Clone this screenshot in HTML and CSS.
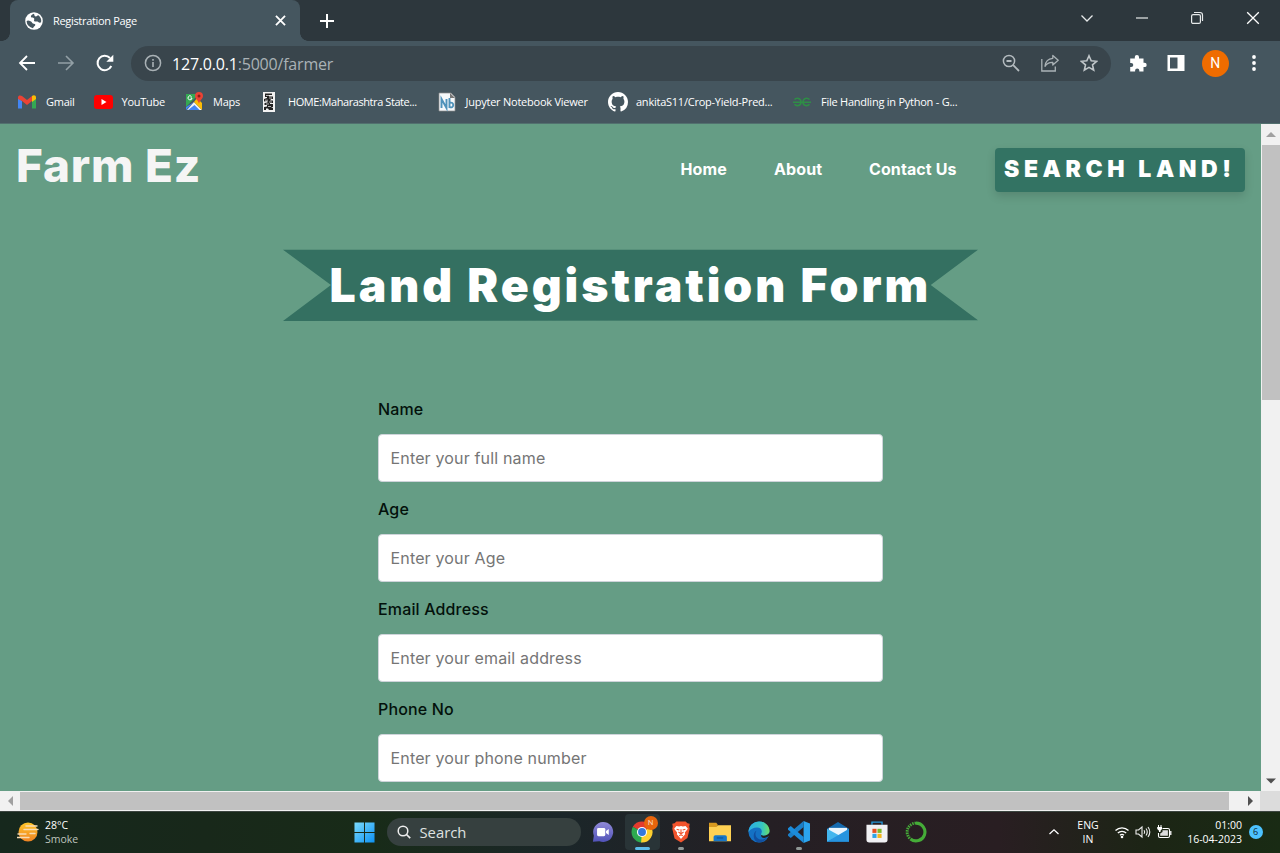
FILE: index.html
```html
<!DOCTYPE html>
<html lang="en">
<head>
<meta charset="utf-8">
<title>Registration Page</title>
<link rel="stylesheet" href="styles.css">
</head>
<body>
<div class="screen">
  <header class="tabstrip">
    <div class="tab">
      <svg class="globe" viewBox="0 0 18 18"><circle cx="9" cy="9" r="8.800" fill="#fff"/><path d="M1.600 9.200C3 8 4.200 9 5.500 9.300c1.700.4 1 1.500 2.300 2.200 1.200.6 2.700.2 2.500 1.500-.2 1.200-1.500 1-2.300 3.200A7.400 7.400 0 0 1 1.600 9.200zM8.500 1.700C6.800 2.500 5.500 3.500 6 5c.5 1.300 2.200.3 3 1.200.9 1-.6 1.800.2 2.900.9 1.200 2.500-.2 3.700.6 1.200.8 1.800 1.400 3.200.6A7.300 7.300 0 0 0 13 3c-.8 1.600-2.800 1.800-3.400.7-.4-.8.2-1.400-1.100-2z" fill="#45565f"/></svg>
      <span class="tab-title">Registration Page</span>
      <svg class="tab-close" viewBox="0 0 12 12"><path d="M1.800 1.800l8.400 8.400M10.200 1.800l-8.400 8.400" stroke="#fff" stroke-width="1.700"/></svg>
    </div>
    <svg class="newtab" viewBox="0 0 16 16"><path d="M8 1v14M1 8h14" stroke="#fff" stroke-width="2"/></svg>
    <div class="window-controls">
      <svg viewBox="0 0 14 14"><path d="M1.500 4.500L7 10l5.500-5.500" fill="none" stroke="#e6e9ea" stroke-width="1.300"/></svg>
      <svg viewBox="0 0 14 14"><path d="M1 7h12" stroke="#e6e9ea" stroke-width="1.200"/></svg>
      <svg viewBox="0 0 14 14"><rect x="1.600" y="3.600" width="8.800" height="8.800" rx="1.500" fill="none" stroke="#e6e9ea" stroke-width="1.200"/><path d="M4 1.500h6a2.500 2.500 0 0 1 2.500 2.500v6" fill="none" stroke="#e6e9ea" stroke-width="1.200"/></svg>
      <svg viewBox="0 0 14 14"><path d="M1.200 1.200l11.600 11.600M12.800 1.200L1.200 12.800" stroke="#fff" stroke-width="1.300"/></svg>
    </div>
  </header>

  <div class="toolbar">
    <svg class="nav" viewBox="0 0 18 18"><path d="M17 9H2M9 2L2 9l7 7" fill="none" stroke="#fff" stroke-width="1.800"/></svg>
    <svg class="nav" viewBox="0 0 18 18"><path d="M1 9h15M9 2l7 7-7 7" fill="none" stroke="#93a0a6" stroke-width="1.600"/></svg>
    <svg class="nav" viewBox="0 0 18 18"><path d="M15.300 12A7.200 7.200 0 1 1 14 4" fill="none" stroke="#fff" stroke-width="2"/><path d="M17.300.8v7h-7z" fill="#fff"/></svg>
    <div class="omnibox">
      <svg class="info" viewBox="0 0 18 18"><circle cx="9" cy="9" r="7.600" fill="none" stroke="#a9b1b5" stroke-width="1.500"/><path d="M9 8v5M9 5v1.700" stroke="#a9b1b5" stroke-width="1.600"/></svg>
      <div class="url"><b>127.0.0.1</b>:5000/farmer</div>
      <svg viewBox="0 0 18 18"><circle cx="7" cy="7" r="5.600" fill="none" stroke="#b4bbbf" stroke-width="1.500"/><path d="M4.500 7h5M11.200 11.200L17 17" stroke="#b4bbbf" stroke-width="1.800"/></svg>
      <svg viewBox="0 0 18 18"><path d="M.8 5v12h13.500v-4.500" fill="none" stroke="#aab2b6" stroke-width="1.300"/><path d="M11.800 1.500l5.400 4.800-5.400 4.800V8.300c-3.800-.2-5.900 1-7.800 4 .4-4.600 2.900-7.600 7.800-8z" fill="none" stroke="#aab2b6" stroke-width="1.300" stroke-linejoin="round"/></svg>
      <svg viewBox="0 0 18 18"><path d="M9 1.800l2.200 5 5.400.5-4.100 3.600 1.200 5.300L9 13.400l-4.700 2.800 1.200-5.300L1.400 7.300l5.400-.5z" fill="none" stroke="#c0c6c9" stroke-width="1.600"/></svg>
    </div>
    <div class="actions">
      <svg viewBox="0 0 18 18"><path d="M1.200 4.500h4.600V3a2.100 2.100 0 0 1 4.200 0v1.500h4.500v4.200h1a2.200 2.200 0 0 1 0 4.400h-1v4.400h-4.200v-1a2.100 2.100 0 0 0-4.200 0v1H1.200v-4.400h1a2.100 2.100 0 0 0 0-4.200h-1z" fill="#fff"/></svg>
      <svg viewBox="0 0 18 18"><path d="M.5 1h17v16H.5zM3 3.500v11h7.500v-11z" fill="#fff" fill-rule="evenodd"/></svg>
      <span class="avatar">N</span>
      <svg viewBox="0 0 18 18" fill="#fff"><circle cx="9" cy="3" r="1.900"/><circle cx="9" cy="9" r="1.900"/><circle cx="9" cy="15" r="1.900"/></svg>
    </div>
  </div>

  <nav class="bookmarks">
    <span class="bm"><svg viewBox="0 0 20 20"><path d="M0 6v10.500h4V9z" fill="#4285f4"/><path d="M14 9v7.500h4V6z" fill="#34a853"/><path d="M0 5.500C0 3 2.500 3 4 4l5 4 5-4v5l-5 4-5-4-4-2z" fill="#ea4335"/><path d="M14 4c1.500-1.200 4-1 4 1.500V7l-4 3z" fill="#fbbc04"/></svg><span>Gmail</span></span>
    <span class="bm"><svg viewBox="0 0 20 20"><rect x="0" y="3" width="19" height="14" rx="3" fill="#f00"/><path d="M7.500 7v6l5-3z" fill="#fff"/></svg><span>YouTube</span></span>
    <span class="bm"><svg viewBox="0 0 20 20"><path d="M1 2h13L1 15z" fill="#34a853"/><path d="M1 15v3l8-8z" fill="#4285f4"/><path d="M2 18l7-8 8 8z" fill="#f1f3f4"/><path d="M3 18l6.500-5 5 5z" fill="#4285f4"/><path d="M9 10l3-4 5 5v7z" fill="#fbbc04"/><path d="M14 0a4 4 0 0 0-4 4c0 3 3.500 4 4 8 .5-4 4-5 4-8a4 4 0 0 0-4-4z" fill="#ea4335"/><circle cx="14" cy="4" r="1.500" fill="#8c1d18"/><path d="M6.500 4.500A2 2 0 1 0 7 6H5.500" fill="none" stroke="#fff" stroke-width="1"/></svg><span>Maps</span></span>
    <span class="bm narrow"><svg viewBox="0 0 20 20"><rect x="3" y="0" width="12" height="20" fill="#f3f3f3"/><path d="M5 1.500h7V3H9v1.500h4V7h-2l-1 1.500h3V11h-3v1h3v3l-2 1h2v2H9l-1-1.500H6V18H4v-3l3-.5V13H4.500v-2l3-.5V9L4 9.500V7l3-1V5H5z" fill="#222"/><path d="M6 3.500h3M9 6h3M5 8.200h3M9 10h3M6 12h3M8 14.500h3" stroke="#eee" stroke-width=".7"/></svg><span>HOME:Maharashtra State...</span></span>
    <span class="bm"><svg viewBox="0 0 20 20"><path d="M1 1h12l4 4v14H1z" fill="#f5f8fa" stroke="#8e8e8e" stroke-width=".7"/><path d="M12 1v5h5" fill="#777"/><path d="M3.500 16V7l5 9V7M11.500 6v10M11.500 11c5-2 5 6 0 4" fill="none" stroke="#4f92ba" stroke-width="1.900"/></svg><span>Jupyter Notebook Viewer</span></span>
    <span class="bm"><svg viewBox="0 0 16 16"><path fill="#fff" d="M8 0C3.580 0 0 3.580 0 8c0 3.540 2.290 6.530 5.470 7.590.4.070.55-.17.55-.38 0-.19-.01-.82-.01-1.490-2.010.37-2.530-.49-2.690-.94-.09-.23-.48-.94-.82-1.130-.28-.15-.68-.52-.01-.53.63-.01 1.080.58 1.230.82.72 1.210 1.870.87 2.330.66.070-.52.28-.87.51-1.070-1.780-.2-3.640-.89-3.640-3.950 0-.87.31-1.590.82-2.150-.08-.2-.36-1.020.08-2.120 0 0 .67-.21 2.200.82.64-.18 1.320-.27 2-.27s1.360.09 2 .27c1.530-1.040 2.200-.82 2.200-.82.44 1.100.16 1.920.08 2.120.51.56.82 1.270.82 2.150 0 3.070-1.870 3.750-3.650 3.950.29.25.54.73.54 1.480 0 1.070-.01 1.930-.01 2.200 0 .21.15.46.55.38A8.010 8.010 0 0 0 16 8c0-4.420-3.580-8-8-8z"/></svg><span>ankitaS11/Crop-Yield-Pred...</span></span>
    <span class="bm"><svg viewBox="0 0 20 20"><path d="M1.500 7.500c2.500-2.600 6.500-.8 6.500 2.700 0 3.500-4.500 4.500-6.500 2M16.500 7.500c-2.500-2.600-6.500-.8-6.500 2.700 0 3.500 4.500 4.500 6.500 2M0 10.300h18" fill="none" stroke="#2f8d46" stroke-width="1.600"/></svg><span>File Handling in Python - G...</span></span>
  </nav>

  <div class="viewport">
    <main class="page">
      <div class="site-nav">
        <h1 class="brand">Farm Ez</h1>
        <a class="link home">Home</a>
        <a class="link about">About</a>
        <a class="link contact">Contact Us</a>
        <a class="cta">SEARCH LAND!</a>
      </div>
      <h2 class="ribbon"><span>Land Registration Form</span></h2>
      <form class="form">
        <label>Name</label><input type="text" placeholder="Enter your full name">
        <label>Age</label><input type="text" placeholder="Enter your Age">
        <label>Email Address</label><input type="text" placeholder="Enter your email address">
        <label>Phone No</label><input type="text" placeholder="Enter your phone number">
      </form>
    </main>
    <div class="vscroll">
      <svg viewBox="0 0 20 20"><path d="M5 13l5-5 5 5z" fill="#a0a0a0"/></svg>
      <div class="vthumb"></div>
      <svg viewBox="0 0 20 20"><path d="M5 7.500l5 5 5-5z" fill="#505050"/></svg>
    </div>
  </div>
  <div class="hscroll">
    <svg viewBox="0 0 20 20"><path d="M13 5l-5 5 5 5z" fill="#a0a0a0"/></svg>
    <div class="hthumb"></div>
    <svg class="right-arrow" viewBox="0 0 20 20"><path d="M8 5l5 5-5 5z" fill="#505050"/></svg>
    <div class="corner"></div>
  </div>

  <footer class="taskbar">
    <div class="weather">
      <svg viewBox="0 0 22 22"><defs><linearGradient id="sun" x2="0" y2="1"><stop stop-color="#ffc529"/><stop offset="1" stop-color="#f08323"/></linearGradient></defs><circle cx="11" cy="11" r="9.500" fill="url(#sun)"/><path d="M9 5h11M7 8.500h14M1 13h8M13 12.500h5M0 16.500h12" stroke="#f7dcb4" stroke-width="1.400" stroke-linecap="round"/></svg>
      <div><div>28°C</div><div class="dim">Smoke</div></div>
    </div>
    <svg class="start" viewBox="0 0 22 22"><defs><linearGradient id="win" x2="1" y2="1"><stop stop-color="#7bdcfd"/><stop offset="1" stop-color="#0d91f2"/></linearGradient></defs><path d="M.5.5h10v10h-10zM11.500.5h10v10h-10zM.5 11.500h10v10h-10zM11.500 11.500h10v10h-10z" fill="url(#win)"/></svg>
    <div class="search"><svg viewBox="0 0 14 14"><circle cx="6" cy="6" r="4.800" fill="none" stroke="#eee" stroke-width="1.500"/><path d="M9.500 9.500L13.200 13.200" stroke="#eee" stroke-width="1.700"/></svg><span>Search</span></div>
    <div class="apps">
      <div class="app"><svg viewBox="0 0 24 24"><defs><linearGradient id="chat" x2="0" y2="1"><stop stop-color="#918ad8"/><stop offset="1" stop-color="#5052b8"/></linearGradient></defs><path d="M12 1a11 11 0 1 1-4 21.200L1 22.500l1-6.500A11 11 0 0 1 12 1z" fill="url(#chat)"/><rect x="5.500" y="7.500" width="9" height="9" rx="1.500" fill="#fff"/><path d="M15.300 11l3-2.200v6.400l-3-2.200z" fill="#fff"/></svg></div>
      <div class="app active"><svg viewBox="0 0 24 24"><path d="M12 12L2 6.400A11.500 11.500 0 0 1 22 6.400z" fill="#e33b2e"/><path d="M12 12v11.500A11.500 11.500 0 0 1 2 6.400z" fill="#2da94f"/><path d="M12 12l10-5.600A11.500 11.500 0 0 1 11 23.500z" fill="#fdd02f"/><circle cx="12" cy="12" r="5.500" fill="#fff"/><circle cx="12" cy="12" r="4.300" fill="#3478dc"/></svg><span class="profile-dot">N</span><i class="mark wide"></i></div>
      <div class="app"><svg viewBox="0 0 24 24"><path d="M7 .5h10l2 2 2.500.5-.5 3 .5 2.500-2.500 10L12 23.500l-7-4.500L2.500 8.500 3 6l-.5-3L5 2.500z" fill="#f2542d"/><path d="M7 5.500l3 .5 2-.6 2 .6 3-.5 2.500 3-3.300 4 .3 2L12 19.500l-4.500-5 .3-2L4.500 8.500z" fill="#fff"/><path d="M7.200 9l3 .8M16.800 9l-3 .8M12 9v4.500M9.200 12l2.800 2 2.800-2M10 16.200l2-1.200 2 1.200" fill="none" stroke="#f2542d" stroke-width="1.200"/></svg><i class="mark"></i></div>
      <div class="app"><svg viewBox="0 0 24 24"><path d="M0 2h8l1.500 2V9H0z" fill="#d89a20"/><path d="M0 6.500h8l2-2h14V22H0z" fill="#ffd153"/><path d="M5 22v-4.500a2 2 0 0 1 2-2h10.500a2 2 0 0 1 2 2V22z" fill="#1877c8"/><path d="M8.500 18.500h7" stroke="#0b4d8e"/></svg></div>
      <div class="app"><svg viewBox="0 0 24 24"><defs><linearGradient id="edge" x2="1"><stop stop-color="#2baee4"/><stop offset=".65" stop-color="#36c5c1"/><stop offset="1" stop-color="#6bdd64"/></linearGradient></defs><circle cx="12" cy="12" r="11.500" fill="#1471c4"/><path d="M.5 12C.5 5.500 6 .5 12.200.5 19 .5 23.500 6 23.500 10.500c0 4-3.500 5.500-6.500 5.500-2.500 0-3.700-1-2.600-2.400 2-3.200-.5-6.400-4.600-6.400C6 7.200 2.500 9 .5 12z" fill="url(#edge)"/><path d="M9.200 10.500c-2.800 4 0 9.800 5.300 9.800 3 0 5.800-1.600 7-3.100C19 21.500 15 23.800 11 23.200 5 21.500 5 12.500 9.200 10.500z" fill="#114f9f"/><path d="M14.400 13.600c-1.100 1.400.1 2.400 2.600 2.400 2.600 0 5.700-1.200 6.500-3.700l.5 3-2.500 2c-3.500 2.200-8.500 1.500-7.100-3.700z" fill="#22211f"/></svg></div>
      <div class="app"><svg viewBox="0 0 24 24"><path d="M17 0l7 2.800v18.400L17 24z" fill="#2ba4ee"/><path d="M17 0v6.500L3 18.500 0 16v-1.500z" fill="#1b7fc8"/><path d="M17 24v-6.500L3 5.500 0 8v1.500z" fill="#1b8cdb"/></svg><i class="mark"></i></div>
      <div class="app"><svg viewBox="0 0 24 24"><path d="M0 8.500l12-7.500 12 7.500V22.500H0z" fill="#1569ad"/><path d="M2 7.500h20v9H2z" fill="#eaf5fd"/><path d="M0 8.500L14 16 0 22.500z" fill="#43b6ee"/><path d="M24 8.500v14H0z" fill="#2794df"/></svg></div>
      <div class="app"><svg viewBox="0 0 24 24"><path d="M6.500 4V1.200h11V4" fill="none" stroke="#2496d7" stroke-width="1.500"/><path d="M.5 4h23v16.500a3 3 0 0 1-3 3h-17a3 3 0 0 1-3-3z" fill="#f1f1f4"/><path d="M7 8.500h4.500V13H7z" fill="#e55022"/><path d="M12.500 8.500H17V13h-4.500z" fill="#7db728"/><path d="M7 14h4.500v4.500H7z" fill="#2ca3e6"/><path d="M12.500 14H17v4.500h-4.500z" fill="#f4b51b"/></svg></div>
      <div class="app"><svg viewBox="0 0 24 24"><path d="M12 2.300a9.700 9.700 0 1 1-6 17.300" fill="none" stroke="#45ac38" stroke-width="3.400"/><path d="M12 2.300A9.700 9.700 0 0 0 6 19.600" fill="none" stroke="#45ac38" stroke-width="3.200" stroke-dasharray="1.600 1"/></svg></div>
    </div>
    <div class="tray">
      <svg class="up" viewBox="0 0 12 12"><path d="M1.500 8L6 3.800 10.500 8" fill="none" stroke="#fff" stroke-width="1.300"/></svg>
      <div class="lang">ENG<br>IN</div>
      <svg viewBox="0 0 16 16"><path d="M1.500 6.500a9.200 9.200 0 0 1 13 0M3.800 9a6 6 0 0 1 8.400 0M6 11.300a3 3 0 0 1 4 0" fill="none" stroke="#fff" stroke-width="1.300"/><circle cx="8" cy="13" r="1.300" fill="#fff"/></svg>
      <svg viewBox="0 0 16 16"><path d="M1 6h2.500L7 3v10l-3.500-3H1zM9 6.200q1.200 1.800 0 3.600M11 4.500q2.500 3.500 0 7M13 3q3.600 5 0 10" fill="none" stroke="#eee" stroke-width="1.100"/></svg>
      <svg viewBox="0 0 16 16"><path d="M6.500 4.500H12a1.500 1.500 0 0 1 1.500 1.500v6a1.500 1.500 0 0 1-1.500 1.500H4A1.500 1.500 0 0 1 2.500 12V9" fill="none" stroke="#fff" stroke-width="1.100"/><path d="M6.500 6.300h5.400v5.500H4.200V9.500L6.500 8zM14 7h1.500v4H14z" fill="#ddd"/><path d="M2 1h1v2h1.500V1h1v2H6v2L4.500 6.800V8H3V6.800L1.200 5V3H2z" fill="#fff"/></svg>
      <div class="clock">01:00<br>16-04-2023</div>
      <span class="count">6</span>
    </div>
  </footer>
</div>
</body>
</html>
```
FILE: styles.css
```css
* { box-sizing: border-box; }
body { margin: 0; background: #16261a; }
svg { display: block; flex: none; }
.screen {
  width: 1280px; height: 853px; overflow: hidden;
  display: flex; flex-direction: column;
  font-family: "Open Sans", "Noto Sans", sans-serif; color: #fff;
}

/* Browser frame */
.tabstrip { height: 41px; background: #2d373d; display: flex; align-items: center; flex: none; }
.tab {
  width: 290px; height: 41px; margin-left: 10px; padding: 0 13px 0 15px; position: relative;
  display: flex; align-items: center; background: #45565f; border-radius: 8px 8px 0 0;
}
.tab::before, .tab::after { content: ""; position: absolute; bottom: 0; width: 8px; height: 8px; }
.tab::before { left: -8px; background: radial-gradient(circle at 0 0, transparent 7.500px, #45565f 8px); }
.tab::after { right: -8px; background: radial-gradient(circle at 100% 0, transparent 7.500px, #45565f 8px); }
.globe { width: 18px; height: 18px; }
.tab-title { margin-left: 10px; font-size: 11px; flex: 1; letter-spacing: -.32px; }
.tab-close { width: 13px; height: 13px; }
.newtab { width: 16px; height: 16px; margin-left: 18.500px; }
.window-controls { margin-left: auto; margin-right: 20.500px; display: flex; gap: 41.300px; padding-bottom: 5px; }
.window-controls svg { width: 14px; height: 14px; }

.toolbar { height: 44px; background: #45565f; display: flex; align-items: center; padding-left: 17.500px; flex: none; }
.nav { width: 18px; height: 18px; margin-right: 21px; }
.nav:nth-child(3) { margin-right: 17px; }
.omnibox {
  width: 980px; height: 35px; border-radius: 18px; background: #39454c;
  display: flex; align-items: center; padding: 0 13px; gap: 21px;
}
.omnibox svg { width: 18px; height: 18px; }
.url { flex: 1; margin-left: -10.500px; padding-top: 1px; font-size: 16px; letter-spacing: -.2px; color: #aab2b6; }
.url b { font-weight: 400; color: #fff; }
.actions { display: flex; align-items: center; gap: 20.600px; margin-left: 18px; }
.actions svg { width: 18px; height: 18px; }
.avatar {
  width: 27px; height: 27px; margin: 0 -4px; border-radius: 50%; background: #ef6c00;
  font: 14px/27px Roboto, sans-serif; text-align: center;
}

.bookmarks {
  height: 39px; flex: none; background: #45565f; padding: 0 0 5px 18px; border-bottom: 1px solid #52706f;
  display: grid; grid-template-columns: 75.500px 91.500px 75px 177.500px 170.500px 185px 200px; align-items: center;
}
.bm { display: flex; align-items: center; font-size: 11px; white-space: nowrap; letter-spacing: -.24px; }
.narrow { letter-spacing: -.42px; }
.bm svg { width: 20px; height: 20px; margin-right: 8px; }

/* Site */
.viewport { height: 667px; flex: none; display: flex; overflow: hidden; }
.page { width: 1261px; background: #659d85; font-family: Inter, sans-serif; }
.site-nav {
  height: 91px; padding-left: 16px;
  display: grid; grid-template-columns: 664.500px 93.500px 95px 126px 250px; align-items: center;
}
.brand { margin: 0; padding-bottom: 8px; font-size: 45.800px; font-weight: 800; letter-spacing: .8px; color: #f5f5f5; }
.link { padding-bottom: 2px; font-size: 16px; font-weight: 700; letter-spacing: .1px; }
.cta {
  height: 44px; line-height: 43px; padding-left: 9px; border-radius: 4px; background: #337363;
  box-shadow: 0 4px 10px rgba(0, 0, 0, .14);
  font-size: 23px; font-weight: 900; letter-spacing: 4.600px; white-space: nowrap;
}
.ribbon {
  margin: 34px 0 0 283px; width: 695px; height: 72px; line-height: 72px; background: #347061;
  clip-path: polygon(0 1%, 100% 1%, 93.200% 50%, 100% 99%, 0 100%, 6.900% 50%);
  padding-left: 46.500px; font-size: 46.300px; font-weight: 900; letter-spacing: 2.950px; white-space: nowrap;
}
.form { margin: 74px 0 0 378px; width: 505px; display: flex; flex-direction: column; }
.form label { height: 39px; padding-top: 4px; line-height: 20px; font-size: 16px; font-weight: 500; letter-spacing: .15px; color: #03110b; }
.form input {
  height: 48px; margin-bottom: 12.900px; padding: 0 11.500px; border: 1px solid #ced4da; border-radius: 4px; background: #fff;
  font: 16px Inter, sans-serif; letter-spacing: .16px;
}
.form input::placeholder { color: #757575; opacity: 1; }

/* Scrollbars */
.vscroll { width: 19px; background: #f1f1f1; display: flex; flex-direction: column; }
.vscroll svg, .hscroll svg { width: 20px; height: 20px; }
.vthumb { width: 18px; height: 255px; margin: 1px 0 auto 1px; background: #c1c1c1; }
.hscroll { height: 20px; flex: none; background: #f1f1f1; display: flex; }
.hthumb { width: 1209px; height: 18px; margin-top: 1px; background: #c1c1c1; }
.right-arrow { margin-left: 11px; }
.corner { flex: 1; background: #dcdcdc; }

/* Taskbar */
.taskbar {
  flex: 1; display: flex; align-items: center; border-top: 1px solid #3c4540; padding-bottom: 2px;
  background: linear-gradient(90deg, #16281d, #18281a 16%, #182b18 29%, #1b2629 44%, #251f24 60%, #291e22 78%, #1c2515 90%, #192b14);
}
.weather { width: 337.500px; padding-left: 17px; display: flex; align-items: center; gap: 6px; font-size: 10.500px; line-height: 14.500px; }
.weather svg { width: 22px; height: 22px; }
.dim { color: #bdc4be; }
.start { width: 21px; height: 21px; margin: 0 12.500px 0 16px; }
.search {
  width: 194px; height: 28px; border-radius: 14px; background: #36403f; padding-left: 10px;
  display: flex; align-items: center; gap: 8.500px; font-size: 14.800px; color: #dfe2e1;
}
.search svg { width: 14px; height: 14px; }
.apps { display: flex; margin-left: 2.500px; }
.app { width: 39.150px; height: 40px; display: grid; place-items: center; position: relative; }
.app svg { width: 22px; height: 22px; }
.active { background: #293437; border-radius: 4px; width: 35px; height: 36px; margin: 2px; align-self: center; }
.mark { position: absolute; left: 50%; bottom: 2px; width: 6px; height: 3px; margin-left: -3px; border-radius: 2px; background: #8f9795; }
.wide { width: 15px; margin-left: -7px; bottom: 0; background: #5bbcea; }
.profile-dot {
  position: absolute; right: 2px; top: 2px; width: 14px; height: 14px; border-radius: 50%;
  background: #e8650c; font: 8px/14px Roboto, sans-serif; text-align: center; color: #f9d3b8;
}
.tray { margin-left: auto; margin-right: 17.500px; display: flex; align-items: center; font-size: 10.500px; line-height: 14.500px; }
.tray svg { width: 16px; height: 16px; margin-right: 5px; }
.tray .up { width: 12px; height: 12px; margin-right: 17px; }
.lang { width: 22px; text-align: center; margin-right: 15px; }
.clock { width: 65px; text-align: right; white-space: nowrap; }
.count { width: 14px; height: 14px; margin-left: 6.500px; border-radius: 50%; background: #4cc2ff; color: #10242f; font-size: 9px; line-height: 14px; text-align: center; }
```
